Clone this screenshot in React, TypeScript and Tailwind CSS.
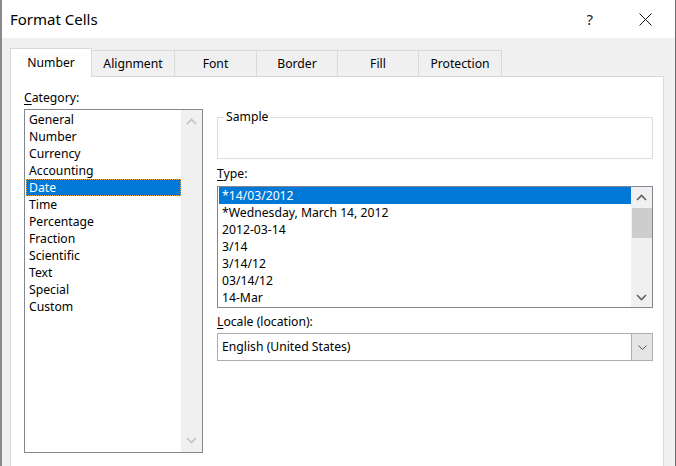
import React from 'react';

const categories = ['General', 'Number', 'Currency', 'Accounting', 'Date', 'Time', 'Percentage', 'Fraction', 'Scientific', 'Text', 'Special', 'Custom'];
const types = ['*14/03/2012', '*Wednesday, March 14, 2012', '2012-03-14', '3/14', '3/14/12', '03/14/12', '14-Mar'];
const tabs = [
  { label: 'Number', w: 'w-[82px]' },
  { label: 'Alignment', w: 'w-[83px]' },
  { label: 'Font', w: 'w-[82px]' },
  { label: 'Border', w: 'w-[81px]' },
  { label: 'Fill', w: 'w-[81px]' },
  { label: 'Protection', w: 'w-[83px]' },
];

function Chevron({ up, color }: { up?: boolean; color: string }) {
  return (
    <svg width="11" height="7" viewBox="0 0 11 7">
      <path d={up ? 'M1 6 L5.5 1.5 L10 6' : 'M1 1 L5.5 5.5 L10 1'} fill="none" stroke={color} strokeWidth="1.6" />
    </svg>
  );
}

export default function App() {
  return (
    <div
      className="w-[676px] h-[466px] overflow-hidden bg-[#f0f0f0] border-l-2 border-l-[#8a8a8a] border-r border-r-[#6b6b6b] flex flex-col text-[12.2px] leading-[16px] text-black"
      style={{ fontFamily: '"Segoe UI", "Noto Sans", sans-serif' }}
    >
      {/* Title bar */}
      <div className="h-[38px] shrink-0 bg-white flex items-center pl-[8px]">
        <span className="text-[15px]">Format Cells</span>
        <span className="ml-auto text-[15px] text-[#222]">?</span>
        <div className="w-[58px] flex justify-center mr-px ml-[23px]">
          <svg width="13" height="13" viewBox="0 0 13 13">
            <path d="M0.5 0.5 L12.5 12.5 M12.5 0.5 L0.5 12.5" stroke="#111" strokeWidth="1" />
          </svg>
        </div>
      </div>

      {/* Tabs */}
      <div className="flex items-end pl-[8px] pt-[10px] h-[38px] shrink-0">
        {tabs.map((t, i) =>
          i === 0 ? (
            <div
              key={t.label}
              className={`${t.w} h-[29px] bg-white border border-[#d9d9d9] border-b-0 relative z-10 -mb-px flex items-center justify-center`}
            >
              {t.label}
            </div>
          ) : (
            <div
              key={t.label}
              className={`${t.w} h-[26px] border border-[#d9d9d9] border-l-0 border-b-0 flex items-center justify-center pt-px`}
            >
              {t.label}
            </div>
          )
        )}
      </div>

      {/* Panel */}
      <div className="flex-1 ml-[8px] mr-[11px] bg-white border border-[#d9d9d9] border-b-0 flex pl-[13px] pr-[10px] pt-[13px]">
        {/* Category */}
        <div className="w-[179px] flex flex-col">
          <div className="mb-[3px]">
            <span className="underline underline-offset-2">C</span>ategory:
          </div>
          <div className="h-[344px] border border-[#828790] flex pl-px">
            <div className="flex-1 pt-px">
              {categories.map((c) =>
                c === 'Date' ? (
                  <div key={c} className="h-[17px] leading-[15px] pl-[2px] bg-[#0078d7] text-white border border-dotted border-[#e8a040]">
                    {c}
                  </div>
                ) : (
                  <div key={c} className="h-[17px] leading-[17px] pl-[3px]">
                    {c}
                  </div>
                )
              )}
            </div>
            <div className="w-[21px] bg-[#f0f0f0] flex flex-col items-center justify-between py-[8px]">
              <Chevron up color="#c2c2c2" />
              <Chevron color="#c2c2c2" />
            </div>
          </div>
        </div>

        {/* Right column */}
        <div className="w-[436px] ml-[14px] flex flex-col pt-[19px]">
          <fieldset className="h-[50px] border border-[#dcdcdc] pl-[6px]">
            <legend className="px-[2px]">Sample</legend>
          </fieldset>

          <div className="mt-[7px]">
            <span className="underline underline-offset-2">T</span>ype:
          </div>
          <div className="mt-[4px] h-[122px] border border-[#828790] flex pl-px">
            <div className="flex-1">
              {types.map((t, i) => (
                <div
                  key={t}
                  className={`h-[17px] leading-[17px] pl-[3px] whitespace-nowrap ${i === 0 ? 'bg-[#0078d7] text-white' : ''}`}
                >
                  {t}
                </div>
              ))}
            </div>
            <div className="w-[21px] bg-[#f0f0f0] flex flex-col items-center">
              <div className="h-[20px] flex items-center justify-center">
                <Chevron up color="#606060" />
              </div>
              <div className="w-[20px] h-[30px] bg-[#cdcdcd] mt-px" />
              <div className="flex-1" />
              <div className="h-[20px] flex items-center justify-center">
                <Chevron color="#606060" />
              </div>
            </div>
          </div>

          <div className="mt-[6px]">
            <span className="underline underline-offset-2">L</span>ocale (location):
          </div>
          <div className="mt-[3px] h-[28px] border border-[#adadad] flex items-center">
            <div className="flex-1 pl-[4px]">English (United States)</div>
            <div className="w-[21px] h-full bg-[#e5e5e5] border-l border-[#adadad] flex items-center justify-center">
              <svg width="9" height="5" viewBox="0 0 9 5">
                <path d="M0.5 0.5 L4.5 4.5 L8.5 0.5" fill="none" stroke="#555" strokeWidth="1" />
              </svg>
            </div>
          </div>
        </div>
      </div>
    </div>
  );
}
